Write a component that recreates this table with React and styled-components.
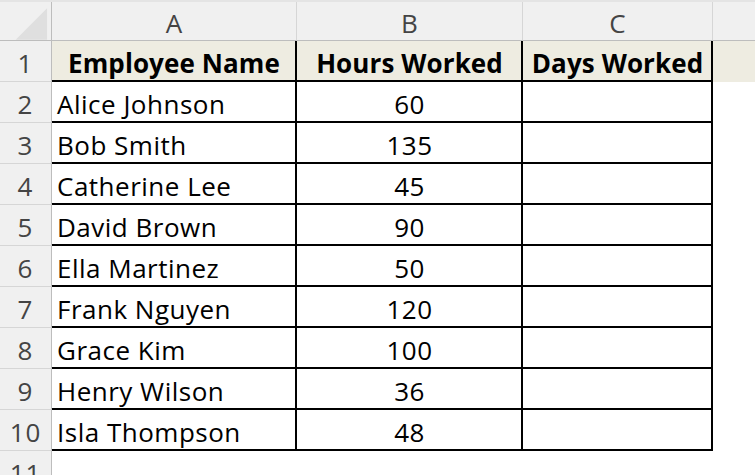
import React from "react";
import styled, { createGlobalStyle } from "styled-components";

const GlobalStyle = createGlobalStyle`
  html, body {
    margin: 0;
    padding: 0;
    background: #ffffff;
    overflow: hidden;
  }
`;

const employees = [
  { name: "Alice Johnson", hours: 60 },
  { name: "Bob Smith", hours: 135 },
  { name: "Catherine Lee", hours: 45 },
  { name: "David Brown", hours: 90 },
  { name: "Ella Martinez", hours: 50 },
  { name: "Frank Nguyen", hours: 120 },
  { name: "Grace Kim", hours: 100 },
  { name: "Henry Wilson", hours: 36 },
  { name: "Isla Thompson", hours: 48 },
];

const App = () => {
  return (
    <>
      <GlobalStyle />
      <Page>
        <TopStrip />
        <Sheet>
          <Corner>
            <svg width="52" height="39" viewBox="0 0 52 39">
              <polygon points="16,38 48,38 48,6" fill="#dfdfdf" />
            </svg>
          </Corner>
          <ColHeader>A</ColHeader>
          <ColHeader>B</ColHeader>
          <ColHeader>C</ColHeader>
          <ColHeader $last />

          <RowHeader>1</RowHeader>
          <Cell $head $bordered $align="center">Employee Name</Cell>
          <Cell $head $bordered $align="center">Hours Worked</Cell>
          <Cell $head $bordered $align="center">Days Worked</Cell>
          <Cell $head />

          {employees.map((e, i) => (
            <React.Fragment key={e.name}>
              <RowHeader>{i + 2}</RowHeader>
              <Cell $bordered>{e.name}</Cell>
              <Cell $bordered $align="center">{e.hours}</Cell>
              <Cell $bordered />
              <Cell />
            </React.Fragment>
          ))}

          <RowHeader>11</RowHeader>
          <Cell />
          <Cell />
          <Cell />
          <Cell />
        </Sheet>
      </Page>
    </>
  );
};

const Page = styled.div`
  width: 755px;
  height: 475px;
  overflow: hidden;
  background: #ffffff;
  font-family: "Open Sans", "Liberation Sans", sans-serif;
`;

const TopStrip = styled.div`
  height: 2px;
  background: #e4e4e4;
`;

const Sheet = styled.div`
  display: grid;
  grid-template-columns: 52px 245px 226px 190px 1fr;
  grid-template-rows: 39px repeat(11, 41px);
`;

const Corner = styled.div`
  background: #f0f0f0;
  border-right: 1px solid #bdbdbd;
  border-bottom: 1px solid #bdbdbd;
  box-sizing: border-box;
  display: flex;
  svg {
    display: block;
  }
`;

const ColHeader = styled.div`
  background: #f0f0f0;
  color: #444444;
  font-size: 26px;
  line-height: 30px;
  box-sizing: border-box;
  border-bottom: 1px solid #bdbdbd;
  border-right: ${(p) => (p.$last ? "none" : "1px solid #d6d6d6")};
  display: flex;
  align-items: center;
  justify-content: center;
  padding-top: 3px;
`;

const RowHeader = styled.div`
  background: #f0f0f0;
  color: #444444;
  font-size: 26px;
  line-height: 30px;
  letter-spacing: 1px;
  box-sizing: border-box;
  border-right: 1px solid #bdbdbd;
  border-bottom: 1px solid #d6d6d6;
  display: flex;
  align-items: center;
  justify-content: center;
  padding-top: 4px;
`;

const Cell = styled.div`
  box-sizing: border-box;
  background: ${(p) => (p.$head ? "#eeece1" : "#ffffff")};
  color: #000000;
  font-size: 26px;
  line-height: 30px;
  font-weight: ${(p) => (p.$head ? 700 : 400)};
  letter-spacing: ${(p) => (p.$head ? "0.1px" : "0.5px")};
  border-right: ${(p) => (p.$bordered ? "2px solid #000" : "none")};
  border-bottom: ${(p) => (p.$bordered ? "2px solid #000" : "none")};
  display: flex;
  align-items: center;
  justify-content: ${(p) => (p.$align === "center" ? "center" : "flex-start")};
  padding: 4px 4px 0 5px;
  white-space: nowrap;
  overflow: hidden;
`;

export default App;
